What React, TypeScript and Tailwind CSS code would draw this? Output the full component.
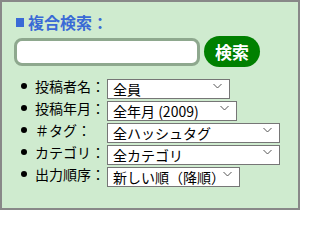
const FONT = "font-['Noto_Sans_CJK_JP','Noto_Sans',sans-serif]"

interface FilterRow {
  label: string
  value: string
  width: string
}

// Each select keeps its own width, as in the original form
const ROWS: FilterRow[] = [
  { label: '投稿者名：', value: '全員', width: 'w-[123px]' },
  { label: '投稿年月：', value: '全年月 (2009)', width: 'w-[130px]' },
  { label: '＃タグ：', value: '全ハッシュタグ', width: 'w-[173px]' },
  { label: 'カテゴリ：', value: '全カテゴリ', width: 'w-[173px]' },
  { label: '出力順序：', value: '新しい順（降順）', width: 'w-[133px]' },
]

function Chevron() {
  return (
    <svg width="9" height="5" viewBox="0 0 9 5" className="pointer-events-none absolute right-[8px] top-1/2 -translate-y-1/2">
      <path d="M0.5 0.5l4 4 4-4" fill="none" stroke="#555" strokeWidth="1" />
    </svg>
  )
}

export default function App() {
  return (
    <div className={`w-[300px] h-[210px] border-2 border-[#888] bg-[#cfebcf] px-3 pt-[10px] ${FONT}`}>
      <h2 className="flex items-center gap-[4px] text-[16px] leading-[20px] font-bold text-[#3a6ad6]">
        <span className="inline-block w-[8px] h-[9px] bg-[#3a6ad6] ml-[2px]" />
        複合検索：
      </h2>

      <div className="mt-[4px] flex items-center gap-[4px]">
        <input
          type="text"
          className="w-[186px] h-[28px] rounded-lg border-[3px] border-[#8ea88e] bg-white px-2 text-[14px] outline-none"
        />
        <button className="w-[56px] h-[31px] rounded-full bg-[#008000] text-white font-bold text-[17px] leading-none">
          検索
        </button>
      </div>

      <ul className="mt-[9px] flex flex-col gap-[2px]">
        {ROWS.map((row) => (
          <li key={row.label} className="flex items-center h-[20px]">
            <span className="shrink-0 w-[6px] h-[6px] rounded-full bg-black ml-[7px] mr-[8px]" />
            <span className="shrink-0 w-[72px] whitespace-nowrap text-[14px] leading-[20px] text-black">{row.label}</span>
            <div className={`relative shrink-0 ${row.width} h-[20px]`}>
              <select
                defaultValue={row.value}
                className="w-full h-full appearance-none border border-[#767676] bg-white pl-[5px] text-[14px] leading-[18px] text-black"
              >
                <option>{row.value}</option>
              </select>
              <Chevron />
            </div>
          </li>
        ))}
      </ul>
    </div>
  )
}
